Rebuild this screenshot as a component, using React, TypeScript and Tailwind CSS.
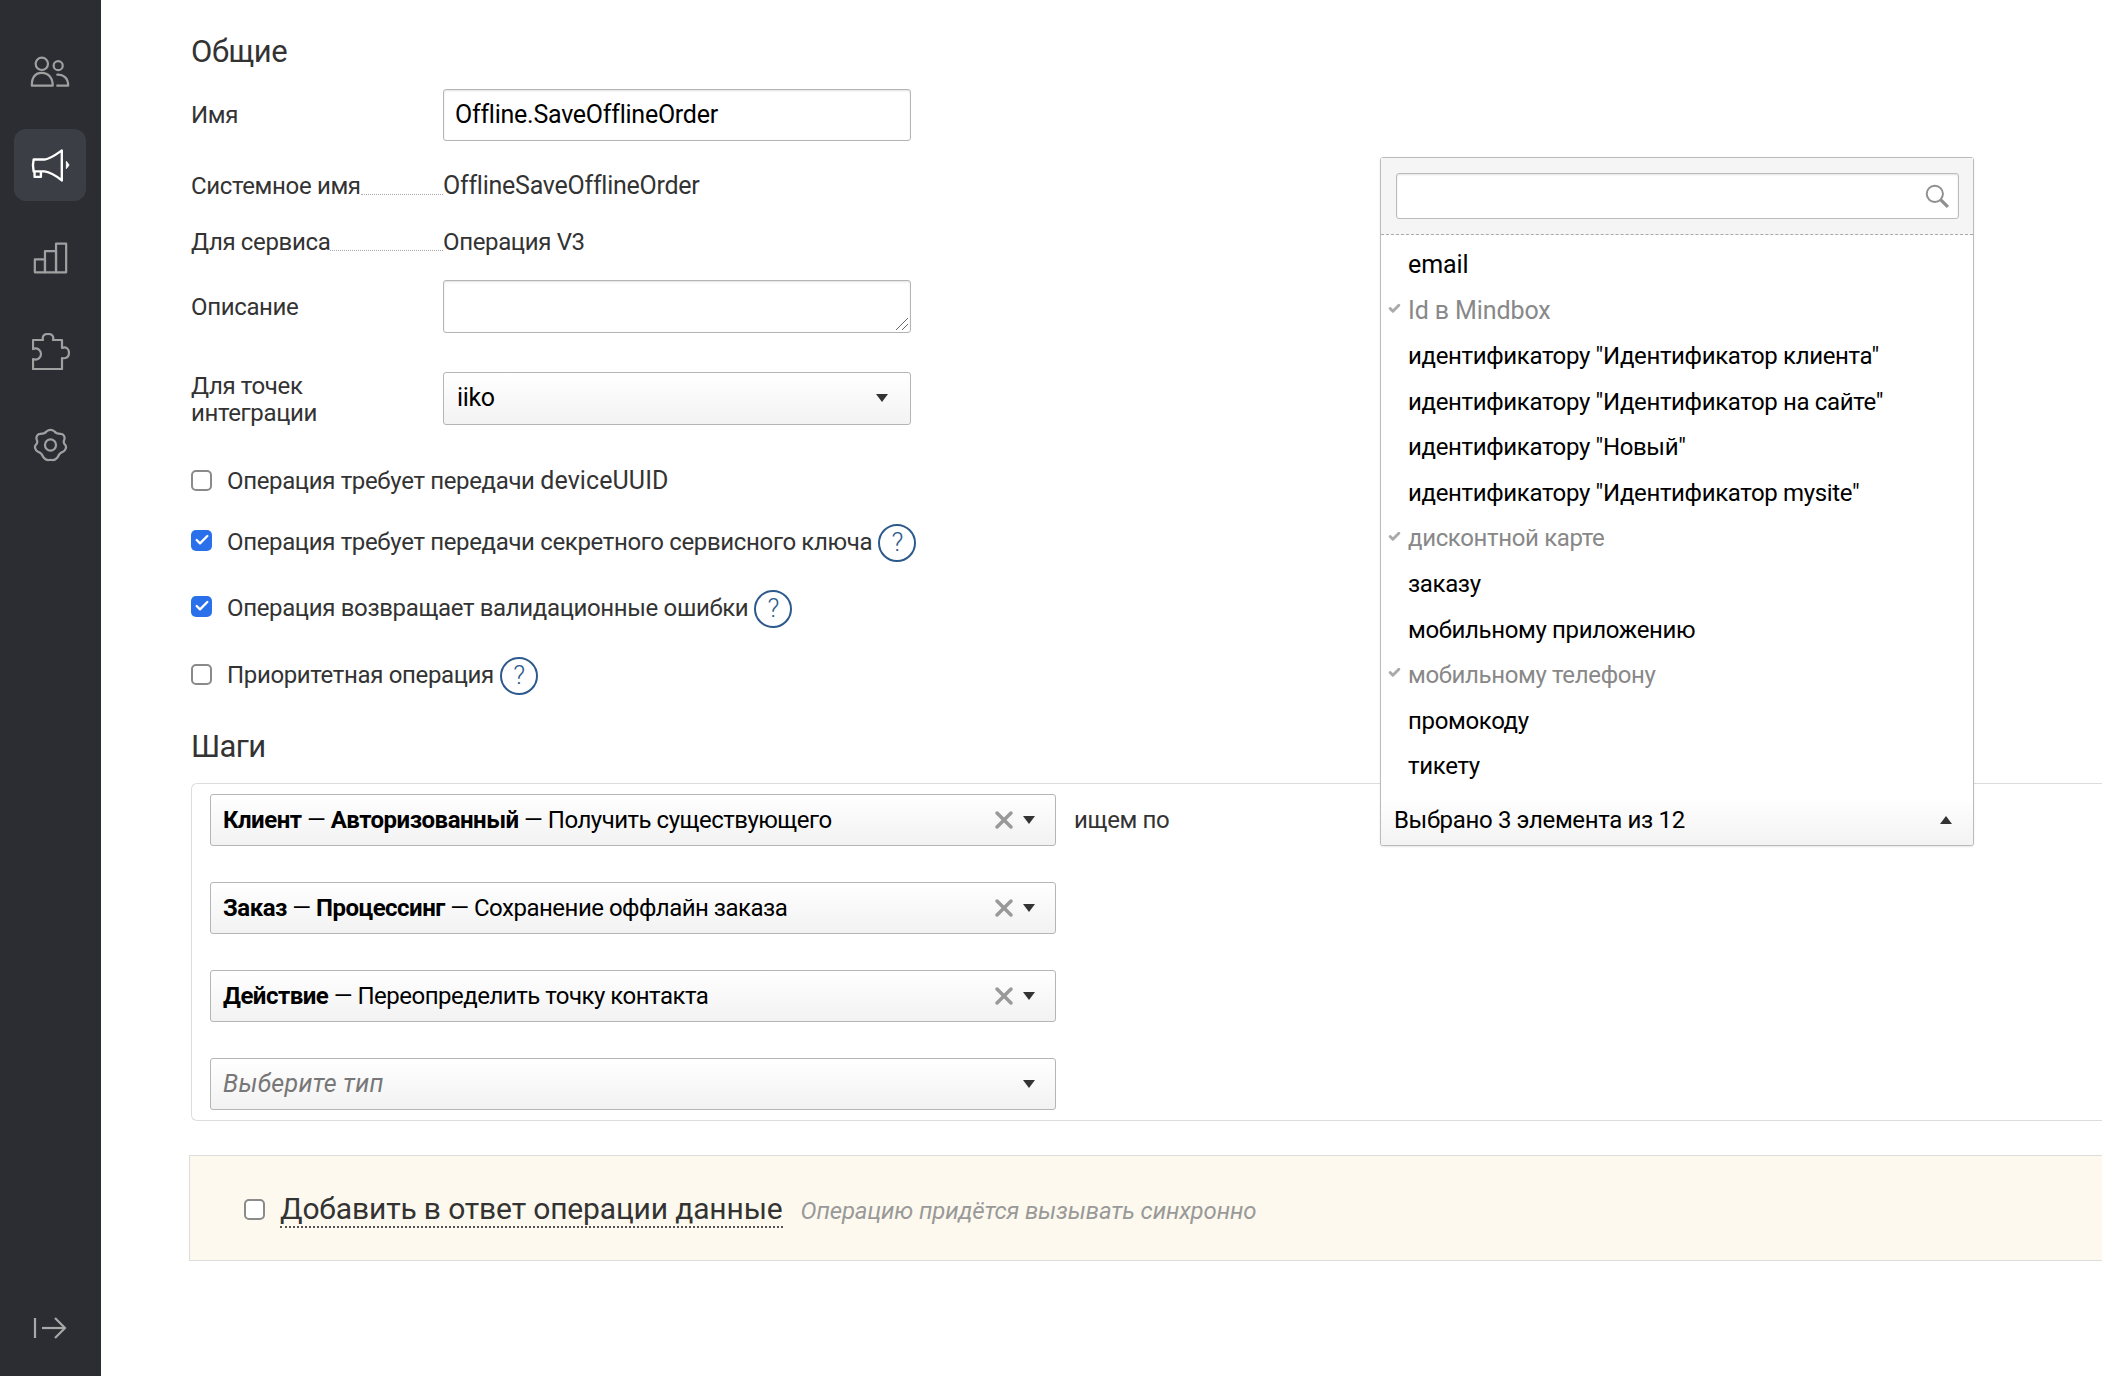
import type { ReactNode } from "react";
import { Check, X } from "lucide-react";

const options = [
  { label: "email", latin: true },
  { label: "Id в Mindbox", picked: true, latin: true },
  { label: 'идентификатору "Идентификатор клиента"' },
  { label: 'идентификатору "Идентификатор на сайте"' },
  { label: 'идентификатору "Новый"' },
  { label: 'идентификатору "Идентификатор mysite"' },
  { label: "дисконтной карте", picked: true },
  { label: "заказу" },
  { label: "мобильному приложению" },
  { label: "мобильному телефону", picked: true },
  { label: "промокоду" },
  { label: "тикету" },
];

function Arrow({ up = false }: { up?: boolean }) {
  return (
    <svg width="12" height="8" viewBox="0 0 12 8" className="shrink-0">
      <path d={up ? "M0 8 L6 0 L12 8 Z" : "M0 0 L12 0 L6 8 Z"} fill="#333" />
    </svg>
  );
}

function Box({ checked = false }: { checked?: boolean }) {
  return checked ? (
    <span className="mb-[2px] flex h-[21px] w-[21px] shrink-0 items-center justify-center rounded-[5px] bg-[#2a70ea]">
      <Check size={16} strokeWidth={3.5} className="text-white" />
    </span>
  ) : (
    <span className="h-[21px] w-[21px] shrink-0 rounded-[5px] border-2 border-[#8a8a8a] bg-white" />
  );
}

function Help() {
  return (
    <span className="ml-[6px] mt-[3px] flex h-[38px] w-[38px] shrink-0 items-center justify-center rounded-full border-2 border-[#2c5a8c] text-[26px] font-light text-[#2c5a8c]">
      ?
    </span>
  );
}

function CheckRow({ checked, text, help, cls }: { checked?: boolean; text: ReactNode; help?: boolean; cls: string }) {
  return (
    <div className={`flex items-center ${cls}`}>
      <Box checked={checked} />
      <span className="ml-[15px] pt-[2px] text-[#333]">{text}</span>
      {help && <Help />}
    </div>
  );
}

function StepSelect({ strong, rest }: { strong?: ReactNode; rest?: string }) {
  return (
    <div className="flex h-[52px] w-[846px] items-center rounded-[3px] border border-[#b5b5b5] bg-gradient-to-b from-white to-[#f2f2f2] pl-[12px] pr-[20px]">
      {strong ? (
        <span className="flex-1 tracking-[-0.5px] text-black">
          {strong} {rest}
        </span>
      ) : (
        <span className="flex-1 text-[25px] italic tracking-[0.3px] text-[#777]">Выберите тип</span>
      )}
      {strong && <X size={28} strokeWidth={3} className="mr-[5px] text-[#999]" />}
      <Arrow />
    </div>
  );
}

function Sidebar() {
  return (
    <aside className="flex h-[1376px] w-[101px] shrink-0 flex-col items-center bg-[#2b2d33] pb-[37px] pr-[1px] pt-[36px]">
      <div className="flex flex-col gap-[21px]">
        <div className="flex h-[72px] w-[72px] items-center justify-center">
          <svg width="40" height="34" viewBox="0 0 44 36" fill="none" stroke="#a0a0a0" strokeWidth="2.4" strokeLinejoin="round">
            <circle cx="13" cy="9" r="6.8" />
            <circle cx="31" cy="11" r="5" />
            <path d="M2 33 C2 24 6 19 13 19 C20 19 25 24 25 33 Z" />
            <path d="M29 21 C37 20 42 25 42 33 L29 33" />
          </svg>
        </div>
        <div className="flex h-[72px] w-[72px] items-center justify-center rounded-xl bg-[#3b3e44]">
          <svg width="40" height="36" viewBox="0 0 44 38" fill="none" stroke="#fff" strokeWidth="2.6" strokeLinejoin="round">
            <path d="M4 13 L16 13 C23 12 28 8 35 3 L35 36 C29 31 23 27 16 26 L4 26 C3 22 3 17 4 13 Z" />
            <path d="M5 26 L5 32 L12 32 L12 26" />
            <path d="M40 15 L43 19 L40 23 Z" fill="#fff" strokeWidth="1" />
          </svg>
        </div>
        <div className="flex h-[72px] w-[72px] items-center justify-center">
          <svg width="35" height="34" viewBox="0 0 38 35" fill="none" stroke="#a0a0a0" strokeWidth="2.4" strokeLinejoin="round">
            <path d="M2 19 L13 19 L13 33 L2 33 Z" />
            <path d="M13 10 L25 10 L25 33 L13 33 Z" />
            <path d="M25 2 L36 2 L36 33 L25 33 Z" />
          </svg>
        </div>
        <div className="flex h-[72px] w-[72px] items-center justify-center pl-[2px]">
          <svg width="38" height="37" viewBox="0 0 38 37" fill="none" stroke="#a0a0a0" strokeWidth="2.2" strokeLinejoin="round">
            <path d="M1 7 L11 7 C10 3 12 1 16 1 C20 1 22 3 21 7 L30 7 L30 15 C34 13 37 16 37 20 C37 24 34 26 30 25 L30 36 L1 36 L1 26 C6 28 9 24 9 21 C9 18 6 14 1 16 Z" />
          </svg>
        </div>
        <div className="flex h-[72px] w-[72px] items-center justify-center pt-[2px]">
          <svg width="35" height="34" viewBox="0 0 38 36" fill="none" stroke="#a0a0a0" strokeWidth="2.4" strokeLinejoin="round">
            <circle cx="19" cy="18" r="6" />
            <path d="M15 3 C17 1 21 1 23 3 C25 6 27 6 30 6 C33 6 35 9 34 12 C33 14 33 16 35 18 C37 20 35 24 33 25 C30 26 28 28 27 31 C25 34 22 35 19 34 C16 35 13 34 11 31 C10 28 8 26 5 25 C3 24 1 20 3 18 C5 16 5 14 4 12 C3 9 5 6 8 6 C11 6 13 6 15 3 Z" />
          </svg>
        </div>
      </div>
      <div className="mt-auto">
        <svg width="34" height="22" viewBox="0 0 34 22" fill="none" stroke="#a8a8a8" strokeWidth="2.2">
          <path d="M2 1 L2 21" />
          <path d="M9 11 L32 11" />
          <path d="M22 1 L32 11 L22 21" />
        </svg>
      </div>
    </aside>
  );
}

export default function App() {
  return (
    <div className="flex h-[1376px] w-[2102px] overflow-hidden bg-white text-[24px] tracking-[-0.35px] [font-family:Roboto,'Noto_Sans',sans-serif]">
      <Sidebar />
      <main className="relative flex-1 pl-[90px] pt-[34px]">
        <h2 className="flex h-[34px] items-center pt-[2px] text-[31px] tracking-[-0.4px] text-[#333]">Общие</h2>

        <div className="mt-[21px] flex items-center">
          <span className="w-[252px] text-[#333]">Имя</span>
          <div className="flex h-[52px] w-[468px] items-center rounded-[3px] border border-[#b5b5b5] pl-[11px] text-[25px] tracking-[-0.25px] text-black shadow-[inset_0_1px_2px_rgba(0,0,0,0.12)]">
            Offline.SaveOfflineOrder
          </div>
        </div>

        <div className="mt-[29px] flex h-[30px] items-center">
          <div className="flex w-[252px] items-center pt-[2px] text-[#333]">
            <span>Системное имя</span>
            <span className="mt-[16px] flex-1 border-b border-dotted border-[#aaa]" />
          </div>
          <span className="pt-[2px] text-[25px] tracking-[-0.25px] text-[#333]">OfflineSaveOfflineOrder</span>
        </div>

        <div className="mt-[26px] flex h-[30px] items-center">
          <div className="flex w-[252px] items-center pt-[2px] text-[#333]">
            <span>Для сервиса</span>
            <span className="mt-[16px] flex-1 border-b border-dotted border-[#aaa]" />
          </div>
          <span className="pt-[2px] text-[#333]">Операция V3</span>
        </div>

        <div className="mt-[24px] flex items-center">
          <span className="w-[252px] text-[#333]">Описание</span>
          <div className="relative h-[53px] w-[468px]">
            <textarea
              readOnly
              className="block h-full w-full resize-none rounded-[3px] border border-[#b5b5b5] shadow-[inset_0_1px_2px_rgba(0,0,0,0.12)] outline-none"
            />
            {/* resize grip */}
            <svg width="14" height="14" viewBox="0 0 14 14" stroke="#666" strokeWidth="1" className="absolute bottom-[2px] right-[2px]">
              <path d="M1 13 L13 1" />
              <path d="M7 13 L13 7" />
            </svg>
          </div>
        </div>

        <div className="mt-[38px] flex h-[54px] items-center">
          <span className="w-[252px] pt-[3px] leading-[27px] text-[#333]">
            Для точек
            <br />
            интеграции
          </span>
          <div className="flex h-[53px] w-[468px] items-center justify-between rounded-[3px] border border-[#b5b5b5] bg-gradient-to-b from-white to-[#f3f3f3] pl-[13px] pr-[22px] text-[25px] text-black">
            <span>iiko</span>
            <Arrow />
          </div>
        </div>

        <CheckRow
          cls="mt-[40px] h-[30px]"
          text={
            <>
              Операция требует передачи <span className="text-[25px] tracking-[0.1px]">deviceUUID</span>
            </>
          }
        />
        <CheckRow cls="mt-[27px] h-[38px]" checked help text="Операция требует передачи секретного сервисного ключа" />
        <CheckRow cls="mt-[28px] h-[38px]" checked help text="Операция возвращает валидационные ошибки" />
        <CheckRow cls="mt-[29px] h-[38px]" help text="Приоритетная операция" />

        <h2 className="mt-[36px] flex h-[34px] items-center pt-[2px] text-[31px] tracking-[-0.6px] text-[#333]">Шаги</h2>

        <section className="mt-[20px] flex h-[338px] flex-col gap-[36px] rounded-l-[6px] border border-r-0 border-[#ddd] pl-[18px] pt-[10px]">
          <div className="flex items-center">
            <StepSelect
              strong={
                <>
                  <b>Клиент</b> — <b>Авторизованный</b>
                </>
              }
              rest="— Получить существующего"
            />
            <span className="ml-[18px] text-[#333]">ищем по</span>
          </div>
          <StepSelect
            strong={
              <>
                <b>Заказ</b> — <b>Процессинг</b>
              </>
            }
            rest="— Сохранение оффлайн заказа"
          />
          <StepSelect strong={<b>Действие</b>} rest="— Переопределить точку контакта" />
          <StepSelect />
        </section>

        <section className="-ml-[2px] mt-[34px] flex h-[106px] items-center border border-r-0 border-[#ddd] bg-[#fdf9ee] pl-[54px] pt-[3px]">
          <Box />
          <span className="ml-[15px] border-b-2 border-dotted border-[#555] text-[30px] leading-[34px] tracking-[-0.15px] text-[#333]">
            Добавить в ответ операции данные
          </span>
          <span className="ml-[18px] pt-[2px] text-[24px] italic tracking-[-0.15px] text-[#999]">Операцию придётся вызывать синхронно</span>
        </section>

        {/* open dropdown of the first step, lies over the form */}
        <div className="absolute left-[1279px] top-[157px] z-10 flex h-[689px] w-[594px] flex-col rounded-[3px] border border-[#bbb] bg-white shadow-[0_1px_2px_rgba(0,0,0,0.1)]">
          <div className="h-[77px] shrink-0 border-b border-dashed border-[#aaa] bg-[#f5f5f5] pl-[15px] pr-[14px] pt-[15px]">
            <div className="flex h-[46px] items-center justify-end rounded-[3px] border border-[#bbb] bg-white pr-[8px] shadow-[inset_0_1px_2px_rgba(0,0,0,0.12)]">
              <svg width="26" height="26" viewBox="0 0 24 24" fill="none" stroke="#8f8f8f">
                <circle cx="10" cy="10" r="7.5" strokeWidth="1.8" />
                <path d="M15.5 15.5 L22 22" strokeWidth="3" />
              </svg>
            </div>
          </div>
          <ul className="flex-1 pt-[7px]">
            {options.map((o) => (
              <li
                key={o.label}
                className={`relative flex h-[45.6px] items-center pl-[27px] ${o.picked ? "text-[#888]" : "text-black"} ${
                  o.latin ? "text-[25px] tracking-[-0.1px]" : ""
                }`}
              >
                {o.picked && <Check size={13} strokeWidth={5.5} className="absolute left-[7px] top-[14px] text-[#aaa]" />}
                {o.label}
              </li>
            ))}
          </ul>
          <div className="flex h-[48px] shrink-0 items-center justify-between rounded-b-[3px] bg-gradient-to-b from-white to-[#f3f3f3] pb-[2px] pl-[13px] pr-[21px] text-black">
            Выбрано 3 элемента из 12
            <Arrow up />
          </div>
        </div>
      </main>
    </div>
  );
}
